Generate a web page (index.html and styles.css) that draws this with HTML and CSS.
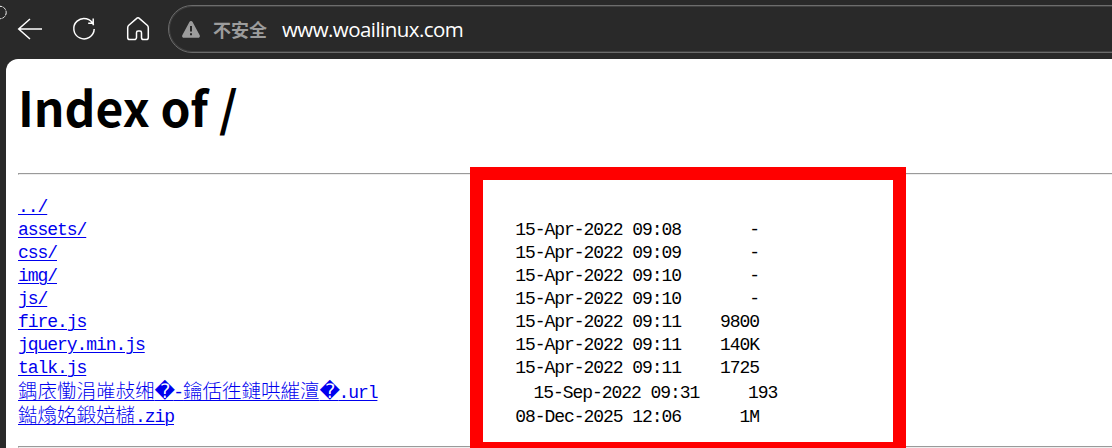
FILE: index.html
```
<!DOCTYPE html>
<html lang="zh-CN">
<head>
    <meta charset="UTF-8">
    <title>Index of /</title>
    <link rel="stylesheet" href="styles.css">
</head>
<body>
    <header class="toolbar">
        <svg class="cursor" width="8" height="16" viewBox="0 0 8 16"><circle cx="0" cy="7.5" r="6.2"/></svg>
        <nav class="buttons">
            <svg width="26" height="26" viewBox="0 0 26 26"><path d="M25 13H2M13 3 1.7 13 13 23"/></svg>
            <svg width="26" height="26" viewBox="0 0 26 26"><path d="M22.6 9.2A10.2 10.2 0 1 0 23.2 13M22.2 2.5V7.3H17.2"/></svg>
            <svg width="26" height="26" viewBox="0 0 26 26"><path d="M11.4 2.6a2.3 2.3 0 0 1 3.2 0l7.6 6.7a3.2 3.2 0 0 1 1.1 2.4v9.8a2.1 2.1 0 0 1-2.1 2.1h-2.6a2.1 2.1 0 0 1-2.1-2.1v-4.8a1.6 1.6 0 0 0-1.6-1.6h-1.8a1.6 1.6 0 0 0-1.6 1.6v4.8a2.1 2.1 0 0 1-2.1 2.1H4.8a2.1 2.1 0 0 1-2.1-2.1v-9.8a3.2 3.2 0 0 1 1.1-2.4z"/></svg>
        </nav>
        <div class="address">
            <svg class="warning" width="18" height="17" viewBox="0 0 18 17"><path d="M7.4 1a1.8 1.8 0 0 1 3.2 0l7.1 13.2a1.8 1.8 0 0 1-1.6 2.6H1.9a1.8 1.8 0 0 1-1.6-2.6z"/><path class="mark" d="M9 5v5.6M9 12.3v2"/></svg>
            <span class="unsafe">不安全</span>
            <span class="host">www.woailinux.com</span>
        </div>
    </header>
    <main class="page">
        <h1>Index of /</h1>
        <hr>
        <pre><a href="#">../</a>
<a href="#">assets/</a>                                            15-Apr-2022 09:08       -
<a href="#">css/</a>                                               15-Apr-2022 09:09       -
<a href="#">img/</a>                                               15-Apr-2022 09:10       -
<a href="#">js/</a>                                                15-Apr-2022 09:10       -
<a href="#">fire.js</a>                                            15-Apr-2022 09:11    9800
<a href="#">jquery.min.js</a>                                      15-Apr-2022 09:11    140K
<a href="#">talk.js</a>                                            15-Apr-2022 09:11    1725
<span class="tall"><a href="#"><span class="han">鍝庡懄涓嶉敊缃</span><span class="bad">�</span>-<span class="han">鑰佸徃鏈哄繀澶</span><span class="bad">�</span>.url</a>                15-Sep-2022 09:31     193
</span><a href="#"><span class="han">鐑熻姳鍛婄櫧</span>.zip</a>                                   08-Dec-2025 12:06      1M
</pre>
        <hr>
        <div class="highlight"></div>
    </main>
</body>
</html>
```
FILE: styles.css
```
body {
    margin: 0;
    height: 448px;
    overflow: hidden;
    background-color: #292929;
    color: #000;
}

.toolbar {
    display: flex;
    align-items: flex-start;
    box-sizing: border-box;
    height: 59px;
    padding-top: 5px;
    position: relative;
}

.toolbar svg {
    fill: none;
    stroke: #fff;
    stroke-width: 1.5;
}

.toolbar .cursor {
    position: absolute;
    left: 0;
    top: 5px;
    stroke: #fff;
    stroke-width: 1;
    stroke-dasharray: 3 1;
}

.buttons {
    display: flex;
    gap: 28px;
    width: 151px;
    padding: 11px 0 0 17px;
}

.buttons svg {
    flex: none;
}

.address {
    flex: 1;
    display: flex;
    align-items: center;
    box-sizing: border-box;
    height: 48px;
    margin-right: -30px;
    padding-left: 13px;
    border: 1px solid #6c6c6c;
    box-shadow: inset 0 0 0 1px #404040;
    border-radius: 24px;
}

.toolbar .warning {
    fill: #9c9c9c;
    stroke: none;
    margin-right: 13px;
}

.toolbar .mark {
    stroke: #292929;
    stroke-width: 2;
}

.unsafe {
    width: 69px;
    color: #9c9c9c;
    font: bold 18px/24px "Noto Sans CJK SC", sans-serif;
}

.host {
    color: #fff;
    font: 20.5px/28px "Open Sans", sans-serif;
    letter-spacing: -0.55px;
}

.page {
    position: relative;
    height: 389px;
    margin-left: 6px;
    padding-left: 12px;
    background-color: #fff;
    border-top-left-radius: 12px;
}

h1 {
    margin: 0;
    padding: 12px 0 32px;
    font: bold 48px/70px "Noto Sans CJK SC", sans-serif;
}

hr {
    margin: 0;
    border: 1px solid;
    border-color: #9a9a9a #eee #eee #9a9a9a;
    border-right: 0;
}

pre {
    margin: 0;
    padding: 21px 0 17px;
    font: 18px/23px "Liberation Mono", "Noto Sans CJK SC", monospace;
    letter-spacing: -1.052px;
}

a {
    color: #0000ee;
    text-underline-offset: 2px;
    text-decoration-thickness: 1px;
}

.han {
    font: 300 19.5px/0 "Noto Sans CJK SC", sans-serif;
    letter-spacing: 0;
}

.bad {
    font: 20px/0 "DejaVu Sans", sans-serif;
    letter-spacing: -1.7px;
}

.tall {
    line-height: 26px;
}

/* red frame around the date and size columns */
.highlight {
    position: absolute;
    left: 464px;
    top: 108px;
    box-sizing: border-box;
    width: 436px;
    height: 288px;
    border: 13px solid #f00;
    clip-path: inset(0 0 7px 0);
}
```
